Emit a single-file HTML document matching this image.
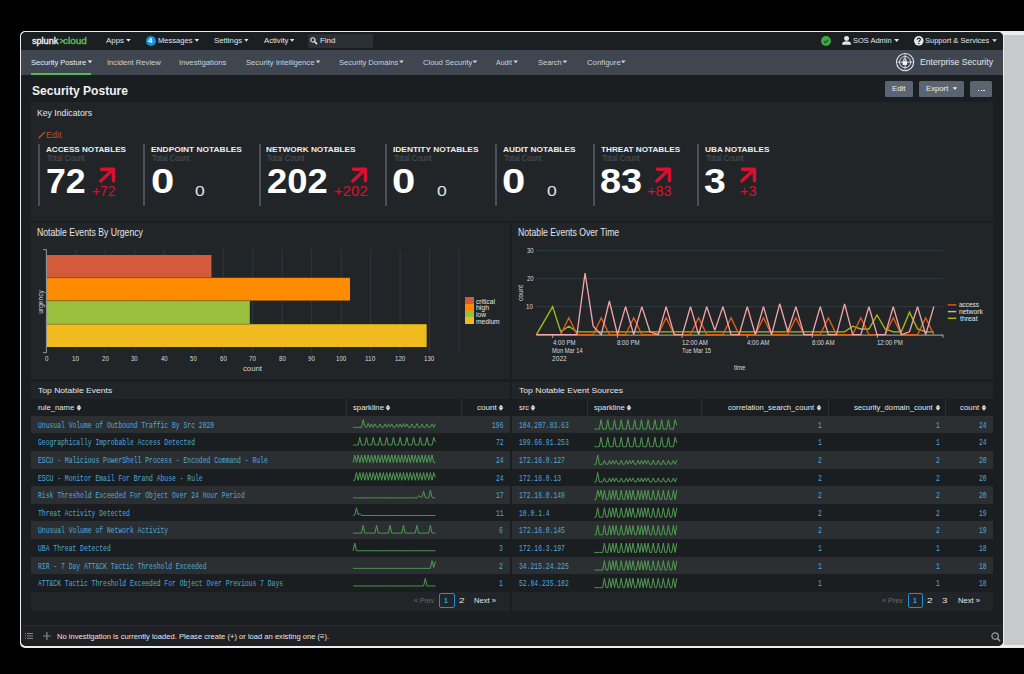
<!DOCTYPE html><html><head><meta charset="utf-8"><style>
html,body{margin:0;padding:0;width:1024px;height:674px;overflow:hidden;background:#000;}
.t{position:absolute;white-space:pre;transform-origin:0 0;}
.r{position:absolute;}
svg{position:absolute;overflow:visible;}
#frame{position:absolute;left:20px;top:31px;width:1004px;height:617px;background:#eceded;border-radius:5px 0 0 5px;}
#gray{position:absolute;left:1004px;top:35px;width:20px;height:610px;background:#c8c9cb;}
#win{position:absolute;left:21px;top:32px;width:982px;height:614px;overflow:hidden;border-radius:5px;background:#1b1e21;}
#in{position:absolute;left:-21px;top:-32px;width:1024px;height:674px;}
</style></head><body>
<div id="frame"></div><div id="gray"></div>
<div id="win"><div id="in">
<div class="r" style="left:0px;top:32px;width:1024px;height:18px;background:#1b1f22;"></div>
<div class="r" style="left:0px;top:50px;width:1024px;height:24.6px;background:#3f4650;"></div>
<div class="r" style="left:30.9px;top:72.8px;width:60px;height:1.8px;background:#53b957;"></div>
<div class="t" style="left:31.67px;top:37.00px;font:400 9.103px/9.103px 'Liberation Sans', sans-serif;color:#f2f2f2;transform:scale(0.9988,1.0000);-webkit-text-stroke:0.35px #f2f2f2;">splunk</div>
<svg style="left:58.5px;top:38px" width="6" height="6" viewBox="0 0 6 6"><path d="M0.9 0.9L4.6 3L0.9 5.1" stroke="#5cbf5a" stroke-width="1.2" fill="none"/></svg>
<div class="t" style="left:63.40px;top:37.00px;font:400 9.103px/9.103px 'Liberation Sans', sans-serif;color:#5cbf5a;transform:scale(1.1011,1.0000);-webkit-text-stroke:0.35px #5cbf5a;">cloud</div>
<div class="t" style="left:106.20px;top:37.00px;font:400 7.464px/7.464px 'Liberation Sans', sans-serif;color:#e3e6e9;transform:scale(1.0626,1.0000);">Apps</div>
<svg style="left:0;top:0" width="1024" height="674"><path d="M126.10 38.90H130.80L128.45 41.80Z" fill="#e1e4e7"/></svg>
<svg style="left:145.7px;top:35.6px" width="10" height="10" viewBox="0 0 10 10"><circle cx="5" cy="5" r="5" fill="#1b8fd8"/></svg>
<div class="t" style="left:148.48px;top:37.00px;font:700 8.116px/8.116px 'Liberation Sans', sans-serif;color:#ffffff;transform:scale(0.9583,1.0000);">4</div>
<div class="t" style="left:157.89px;top:37.00px;font:400 7.464px/7.464px 'Liberation Sans', sans-serif;color:#e3e6e9;transform:scale(1.0163,1.0000);">Messages</div>
<svg style="left:0;top:0" width="1024" height="674"><path d="M194.50 38.90H199.20L196.85 41.80Z" fill="#e1e4e7"/></svg>
<div class="t" style="left:213.75px;top:37.00px;font:400 7.305px/7.305px 'Liberation Sans', sans-serif;color:#e3e6e9;transform:scale(1.0655,1.0000);">Settings</div>
<svg style="left:0;top:0" width="1024" height="674"><path d="M244.20 38.90H248.50L246.35 41.80Z" fill="#e1e4e7"/></svg>
<div class="t" style="left:263.50px;top:37.00px;font:400 7.464px/7.464px 'Liberation Sans', sans-serif;color:#e3e6e9;transform:scale(1.0322,1.0000);">Activity</div>
<svg style="left:0;top:0" width="1024" height="674"><path d="M289.90 38.90H294.40L292.15 41.80Z" fill="#e1e4e7"/></svg>
<div class="r" style="left:308px;top:34px;width:65px;height:14px;background:#2b3035;border-radius:1.5px;"></div>
<svg style="left:310.4px;top:37.4px" width="7" height="7" viewBox="0 0 7 7"><circle cx="2.9" cy="2.9" r="2.15" stroke="#e3e6e9" stroke-width="1.2" fill="none"/><path d="M4.5 4.5L6.6 6.6" stroke="#e3e6e9" stroke-width="1.5" stroke-linecap="round"/></svg>
<div class="t" style="left:319.87px;top:37.00px;font:400 7.464px/7.464px 'Liberation Sans', sans-serif;color:#e3e6e9;transform:scale(1.0619,1.0000);">Find</div>
<svg style="left:821px;top:36px" width="10" height="10" viewBox="0 0 10 10"><circle cx="5" cy="5" r="5" fill="#3ea843"/><path d="M2.9 5.1L4.4 6.6L7.1 3.7" stroke="#24432a" stroke-width="1.1" fill="none"/></svg>
<svg style="left:841.8px;top:36.2px" width="9.2" height="8.8" viewBox="0 0 9.2 8.8"><circle cx="4.6" cy="2.6" r="2.5" fill="#e3e6e9"/><path d="M0 8.8C0 6.2 1.6 5.2 4.6 5.2C7.6 5.2 9.2 6.2 9.2 8.8Z" fill="#e3e6e9"/></svg>
<div class="t" style="left:853.36px;top:37.00px;font:400 7.305px/7.305px 'Liberation Sans', sans-serif;color:#e3e6e9;transform:scale(1.0218,1.0000);">SOS Admin</div>
<svg style="left:0;top:0" width="1024" height="674"><path d="M894.20 39.00H899.20L896.70 41.90Z" fill="#e1e4e7"/></svg>
<svg style="left:913.7px;top:36px" width="9.6" height="9.6" viewBox="0 0 9.6 9.6"><circle cx="4.8" cy="4.8" r="4.8" fill="#e3e6e9"/><path d="M3.2 3.7C3.2 2.7 3.9 2.1 4.8 2.1C5.8 2.1 6.4 2.7 6.4 3.5C6.4 4.6 4.9 4.7 4.9 5.9" stroke="#1b1f22" stroke-width="1.1" fill="none"/><circle cx="4.9" cy="7.4" r="0.7" fill="#1b1f22"/></svg>
<div class="t" style="left:925.26px;top:37.00px;font:400 7.305px/7.305px 'Liberation Sans', sans-serif;color:#e3e6e9;transform:scale(1.0284,1.0000);">Support &amp; Services</div>
<svg style="left:0;top:0" width="1024" height="674"><path d="M992.20 39.20H996.90L994.55 42.10Z" fill="#e1e4e7"/></svg>
<div class="t" style="left:31.06px;top:59.00px;font:400 7.943px/7.943px 'Liberation Sans', sans-serif;color:#eceef0;transform:scale(0.9498,1.0000);">Security Posture</div>
<svg style="left:0;top:0" width="1024" height="674"><path d="M87.70 60.50H92.20L89.95 63.20Z" fill="#eceef0"/></svg>
<div class="t" style="left:107.21px;top:59.00px;font:400 8.116px/8.116px 'Liberation Sans', sans-serif;color:#cdd1d6;transform:scale(0.9402,1.0000);">Incident Review</div>
<div class="t" style="left:178.60px;top:59.00px;font:400 8.116px/8.116px 'Liberation Sans', sans-serif;color:#cdd1d6;transform:scale(0.9565,1.0000);">Investigations</div>
<div class="t" style="left:246.36px;top:59.00px;font:400 7.943px/7.943px 'Liberation Sans', sans-serif;color:#cdd1d6;transform:scale(0.9630,1.0000);">Security Intelligence</div>
<svg style="left:0;top:0" width="1024" height="674"><path d="M315.80 60.50H320.40L318.10 63.20Z" fill="#cdd1d6"/></svg>
<div class="t" style="left:339.06px;top:59.00px;font:400 7.943px/7.943px 'Liberation Sans', sans-serif;color:#cdd1d6;transform:scale(0.9512,1.0000);">Security Domains</div>
<svg style="left:0;top:0" width="1024" height="674"><path d="M399.10 60.50H403.90L401.50 63.20Z" fill="#cdd1d6"/></svg>
<div class="t" style="left:422.82px;top:59.00px;font:400 8.000px/8.000px 'Liberation Sans', sans-serif;color:#cdd1d6;transform:scale(0.9472,1.0000);">Cloud Security</div>
<svg style="left:0;top:0" width="1024" height="674"><path d="M472.60 60.50H477.40L475.00 63.20Z" fill="#cdd1d6"/></svg>
<div class="t" style="left:496.40px;top:59.00px;font:400 8.116px/8.116px 'Liberation Sans', sans-serif;color:#cdd1d6;transform:scale(0.8552,1.0000);">Audit</div>
<svg style="left:0;top:0" width="1024" height="674"><path d="M513.30 60.50H518.10L515.70 63.20Z" fill="#cdd1d6"/></svg>
<div class="t" style="left:538.26px;top:59.00px;font:400 7.943px/7.943px 'Liberation Sans', sans-serif;color:#cdd1d6;transform:scale(0.9414,1.0000);">Search</div>
<svg style="left:0;top:0" width="1024" height="674"><path d="M562.60 60.50H567.40L565.00 63.20Z" fill="#cdd1d6"/></svg>
<div class="t" style="left:586.61px;top:59.00px;font:400 8.000px/8.000px 'Liberation Sans', sans-serif;color:#cdd1d6;transform:scale(0.9718,1.0000);">Configure</div>
<svg style="left:0;top:0" width="1024" height="674"><path d="M620.90 60.50H625.70L623.30 63.20Z" fill="#cdd1d6"/></svg>
<svg style="left:895.9px;top:53px" width="18.4" height="18.4" viewBox="0 0 18.4 18.4"><circle cx="9.1" cy="9.1" r="8.6" stroke="#e3e6e9" stroke-width="1.1" fill="none"/><circle cx="9.1" cy="9.1" r="5.6" stroke="#e3e6e9" stroke-width="0.9" fill="none"/><path d="M9.1 1.2V16.6M1.6 9.1H16.6" stroke="#e3e6e9" stroke-width="0.9"/><rect x="6.6" y="8.3" width="4.4" height="3.6" fill="#f4f5f6"/><path d="M7.5 8.4V7.2a1.3 1.3 0 0 1 2.6 0V8.4" stroke="#f4f5f6" stroke-width="0.9" fill="none"/></svg>
<div class="t" style="left:919.91px;top:58.00px;font:400 8.551px/8.551px 'Liberation Sans', sans-serif;color:#e3e6e9;transform:scale(1.0105,1.0000);">Enterprise Security</div>
<div class="t" style="left:31.60px;top:85.00px;font:700 12.571px/12.571px 'Liberation Sans', sans-serif;color:#f0f1f2;transform:scale(0.9617,1.0000);">Security Posture</div>
<div class="r" style="left:885.2px;top:80.6px;width:27.9px;height:16.4px;background:#5b6571;border-radius:1.5px;"></div>
<div class="r" style="left:919px;top:80.6px;width:45.4px;height:16.4px;background:#5b6571;border-radius:1.5px;"></div>
<div class="r" style="left:969.8px;top:80.6px;width:22.4px;height:16.4px;background:#5b6571;border-radius:1.5px;"></div>
<div class="t" style="left:892.38px;top:85.00px;font:400 7.391px/7.391px 'Liberation Sans', sans-serif;color:#eceef0;transform:scale(1.0558,1.0000);">Edit</div>
<div class="t" style="left:926.28px;top:85.00px;font:400 7.391px/7.391px 'Liberation Sans', sans-serif;color:#eceef0;transform:scale(1.0458,1.0000);">Export</div>
<svg style="left:0;top:0" width="1024" height="674"><path d="M952.70 87.30H957.20L954.95 90.10Z" fill="#eceef0"/></svg>
<div class="r" style="left:977.9px;top:89.7px;width:1.6px;height:1.6px;background:#eceef0;"></div>
<div class="r" style="left:980.5px;top:89.7px;width:1.6px;height:1.6px;background:#eceef0;"></div>
<div class="r" style="left:983.1px;top:89.7px;width:1.6px;height:1.6px;background:#eceef0;"></div>
<div class="r" style="left:31px;top:102px;width:962px;height:119px;background:#222528;"></div>
<div class="t" style="left:37.20px;top:109.00px;font:400 9.348px/9.348px 'Liberation Sans', sans-serif;color:#e3e6e9;transform:scale(0.9302,1.0000);">Key Indicators</div>
<svg style="left:38px;top:132px" width="7.2" height="6.6" viewBox="0 0 7.2 6.6"><path d="M1.5 5.2L6.6 0.5" stroke="#bf521f" stroke-width="1.3" stroke-linecap="round"/><path d="M0.3 6.4L0.9 4.6L2.3 5.9Z" fill="#bf521f"/></svg>
<div class="t" style="left:46.08px;top:131.00px;font:400 9.275px/9.275px 'Liberation Sans', sans-serif;color:#bf521f;transform:scale(0.9662,1.0000);">Edit</div>
<div class="r" style="left:38.25px;top:144px;width:1.5px;height:61.5px;background:#4a5159;"></div>
<div class="t" style="left:46.24px;top:146.00px;font:700 7.971px/7.971px 'Liberation Sans', sans-serif;color:#eceef0;transform:scale(1.0163,1.0000);">ACCESS NOTABLES</div>
<div class="t" style="left:46.95px;top:155.00px;font:400 8.201px/8.201px 'Liberation Sans', sans-serif;color:#4f545a;transform:scale(0.9080,1.0000);">Total Count</div>
<div class="r" style="left:143.25px;top:144px;width:1.5px;height:61.5px;background:#4a5159;"></div>
<div class="t" style="left:150.86px;top:146.00px;font:700 7.971px/7.971px 'Liberation Sans', sans-serif;color:#eceef0;transform:scale(1.0497,1.0000);">ENDPOINT NOTABLES</div>
<div class="t" style="left:151.95px;top:155.00px;font:400 8.201px/8.201px 'Liberation Sans', sans-serif;color:#4f545a;transform:scale(0.9080,1.0000);">Total Count</div>
<div class="r" style="left:259.25px;top:144px;width:1.5px;height:61.5px;background:#4a5159;"></div>
<div class="t" style="left:266.36px;top:146.00px;font:700 7.971px/7.971px 'Liberation Sans', sans-serif;color:#eceef0;transform:scale(1.0346,1.0000);">NETWORK NOTABLES</div>
<div class="t" style="left:267.45px;top:155.00px;font:400 8.201px/8.201px 'Liberation Sans', sans-serif;color:#4f545a;transform:scale(0.9080,1.0000);">Total Count</div>
<div class="r" style="left:385.25px;top:144px;width:1.5px;height:61.5px;background:#4a5159;"></div>
<div class="t" style="left:392.66px;top:146.00px;font:700 7.971px/7.971px 'Liberation Sans', sans-serif;color:#eceef0;transform:scale(1.0474,1.0000);">IDENTITY NOTABLES</div>
<div class="t" style="left:393.75px;top:155.00px;font:400 8.201px/8.201px 'Liberation Sans', sans-serif;color:#4f545a;transform:scale(0.9080,1.0000);">Total Count</div>
<div class="r" style="left:495.25px;top:144px;width:1.5px;height:61.5px;background:#4a5159;"></div>
<div class="t" style="left:503.03px;top:146.00px;font:700 7.971px/7.971px 'Liberation Sans', sans-serif;color:#eceef0;transform:scale(1.0380,1.0000);">AUDIT NOTABLES</div>
<div class="t" style="left:503.75px;top:155.00px;font:400 8.201px/8.201px 'Liberation Sans', sans-serif;color:#4f545a;transform:scale(0.9080,1.0000);">Total Count</div>
<div class="r" style="left:593.25px;top:144px;width:1.5px;height:61.5px;background:#4a5159;"></div>
<div class="t" style="left:601.12px;top:146.00px;font:700 7.971px/7.971px 'Liberation Sans', sans-serif;color:#eceef0;transform:scale(1.0258,1.0000);">THREAT NOTABLES</div>
<div class="t" style="left:601.75px;top:155.00px;font:400 8.201px/8.201px 'Liberation Sans', sans-serif;color:#4f545a;transform:scale(0.9080,1.0000);">Total Count</div>
<div class="r" style="left:697.25px;top:144px;width:1.5px;height:61.5px;background:#4a5159;"></div>
<div class="t" style="left:704.71px;top:146.00px;font:700 7.971px/7.971px 'Liberation Sans', sans-serif;color:#eceef0;transform:scale(1.0329,1.0000);">UBA NOTABLES</div>
<div class="t" style="left:705.75px;top:155.00px;font:400 8.201px/8.201px 'Liberation Sans', sans-serif;color:#4f545a;transform:scale(0.9080,1.0000);">Total Count</div>
<div class="t" style="left:45.57px;top:164.00px;font:700 35.652px/35.652px 'Liberation Sans', sans-serif;color:#ffffff;transform:scale(1.0016,1.0000);">72</div>
<div class="t" style="left:150.54px;top:164.00px;font:700 35.652px/35.652px 'Liberation Sans', sans-serif;color:#ffffff;transform:scale(1.1740,1.0000);">0</div>
<div class="t" style="left:267.11px;top:164.00px;font:700 35.652px/35.652px 'Liberation Sans', sans-serif;color:#ffffff;transform:scale(1.0206,1.0000);">202</div>
<div class="t" style="left:392.14px;top:164.00px;font:700 35.652px/35.652px 'Liberation Sans', sans-serif;color:#ffffff;transform:scale(1.1740,1.0000);">0</div>
<div class="t" style="left:502.14px;top:164.00px;font:700 35.652px/35.652px 'Liberation Sans', sans-serif;color:#ffffff;transform:scale(1.1740,1.0000);">0</div>
<div class="t" style="left:600.06px;top:164.00px;font:700 35.652px/35.652px 'Liberation Sans', sans-serif;color:#ffffff;transform:scale(1.0617,1.0000);">83</div>
<div class="t" style="left:704.42px;top:164.00px;font:700 35.652px/35.652px 'Liberation Sans', sans-serif;color:#ffffff;transform:scale(1.0995,1.0000);">3</div>
<svg style="left:98.9px;top:167.1px" width="16.3" height="15.7" viewBox="0 0 16.3 15.7"><path d="M1.7 14.1L13.2 3.3" stroke="#dc0f2e" stroke-width="3.3" stroke-linecap="round"/><path d="M2.6 2.2H14.5V13.7" stroke="#dc0f2e" stroke-width="3.4" fill="none" stroke-linecap="round" stroke-linejoin="round"/></svg>
<div class="t" style="left:92.38px;top:184.00px;font:400 14.203px/14.203px 'Liberation Sans', sans-serif;color:#dc0f2e;transform:scale(0.9738,1.0000);">+72</div>
<svg style="left:350.7px;top:167.1px" width="16.3" height="15.7" viewBox="0 0 16.3 15.7"><path d="M1.7 14.1L13.2 3.3" stroke="#dc0f2e" stroke-width="3.3" stroke-linecap="round"/><path d="M2.6 2.2H14.5V13.7" stroke="#dc0f2e" stroke-width="3.4" fill="none" stroke-linecap="round" stroke-linejoin="round"/></svg>
<div class="t" style="left:333.53px;top:184.00px;font:400 14.203px/14.203px 'Liberation Sans', sans-serif;color:#dc0f2e;transform:scale(1.0555,1.0000);">+202</div>
<svg style="left:655.2px;top:167.1px" width="16.3" height="15.7" viewBox="0 0 16.3 15.7"><path d="M1.7 14.1L13.2 3.3" stroke="#dc0f2e" stroke-width="3.3" stroke-linecap="round"/><path d="M2.6 2.2H14.5V13.7" stroke="#dc0f2e" stroke-width="3.4" fill="none" stroke-linecap="round" stroke-linejoin="round"/></svg>
<div class="t" style="left:647.35px;top:184.00px;font:400 14.203px/14.203px 'Liberation Sans', sans-serif;color:#dc0f2e;transform:scale(1.0145,1.0000);">+83</div>
<svg style="left:739.7px;top:167.1px" width="16.3" height="15.7" viewBox="0 0 16.3 15.7"><path d="M1.7 14.1L13.2 3.3" stroke="#dc0f2e" stroke-width="3.3" stroke-linecap="round"/><path d="M2.6 2.2H14.5V13.7" stroke="#dc0f2e" stroke-width="3.4" fill="none" stroke-linecap="round" stroke-linejoin="round"/></svg>
<div class="t" style="left:740.15px;top:184.00px;font:400 14.203px/14.203px 'Liberation Sans', sans-serif;color:#dc0f2e;transform:scale(1.0154,1.0000);">+3</div>
<div class="t" style="left:194.59px;top:183.00px;font:400 15.000px/15.000px 'Liberation Sans', sans-serif;color:#e3e6e9;transform:scale(1.1684,1.0000);">0</div>
<div class="t" style="left:436.59px;top:183.00px;font:400 15.000px/15.000px 'Liberation Sans', sans-serif;color:#e3e6e9;transform:scale(1.1684,1.0000);">0</div>
<div class="t" style="left:546.59px;top:183.00px;font:400 15.000px/15.000px 'Liberation Sans', sans-serif;color:#e3e6e9;transform:scale(1.1684,1.0000);">0</div>
<div class="r" style="left:31px;top:223px;width:478.5px;height:156.2px;background:#222528;"></div>
<div class="r" style="left:512px;top:223px;width:481px;height:156.2px;background:#222528;"></div>
<div class="t" style="left:37.31px;top:228.00px;font:400 10.145px/10.145px 'Liberation Sans', sans-serif;color:#e3e6e9;transform:scale(0.8552,1.0000);">Notable Events By Urgency</div>
<div class="t" style="left:518.20px;top:228.00px;font:400 10.145px/10.145px 'Liberation Sans', sans-serif;color:#e3e6e9;transform:scale(0.8563,1.0000);">Notable Events Over Time</div>
<svg style="left:0;top:0" width="1024" height="674" viewBox="0 0 1024 674"><line x1="75.88" y1="249.5" x2="75.88" y2="352.5" stroke="#2e3a3f" stroke-width="0.9"/><line x1="105.35" y1="249.5" x2="105.35" y2="352.5" stroke="#2e3a3f" stroke-width="0.9"/><line x1="134.83" y1="249.5" x2="134.83" y2="352.5" stroke="#2e3a3f" stroke-width="0.9"/><line x1="164.31" y1="249.5" x2="164.31" y2="352.5" stroke="#2e3a3f" stroke-width="0.9"/><line x1="193.78" y1="249.5" x2="193.78" y2="352.5" stroke="#2e3a3f" stroke-width="0.9"/><line x1="223.26" y1="249.5" x2="223.26" y2="352.5" stroke="#2e3a3f" stroke-width="0.9"/><line x1="252.74" y1="249.5" x2="252.74" y2="352.5" stroke="#2e3a3f" stroke-width="0.9"/><line x1="282.22" y1="249.5" x2="282.22" y2="352.5" stroke="#2e3a3f" stroke-width="0.9"/><line x1="311.69" y1="249.5" x2="311.69" y2="352.5" stroke="#2e3a3f" stroke-width="0.9"/><line x1="341.17" y1="249.5" x2="341.17" y2="352.5" stroke="#2e3a3f" stroke-width="0.9"/><line x1="370.65" y1="249.5" x2="370.65" y2="352.5" stroke="#2e3a3f" stroke-width="0.9"/><line x1="400.12" y1="249.5" x2="400.12" y2="352.5" stroke="#2e3a3f" stroke-width="0.9"/><line x1="429.60" y1="249.5" x2="429.60" y2="352.5" stroke="#2e3a3f" stroke-width="0.9"/><line x1="459.08" y1="249.5" x2="459.08" y2="352.5" stroke="#2e3a3f" stroke-width="0.9"/><rect x="46.70" y="255" width="164.77" height="22.80" fill="#d35a3b"/><rect x="46.70" y="277.8" width="303.31" height="22.90" fill="#fe8b00"/><rect x="46.70" y="300.7" width="203.09" height="23.50" fill="#9abf3c"/><rect x="46.70" y="324.2" width="379.95" height="22.80" fill="#efbb1f"/><line x1="46.40" y1="277.8" x2="211.47" y2="277.8" stroke="#000" stroke-opacity="0.3" stroke-width="0.7"/><line x1="46.40" y1="300.7" x2="350.01" y2="300.7" stroke="#000" stroke-opacity="0.3" stroke-width="0.7"/><line x1="46.40" y1="324.2" x2="249.79" y2="324.2" stroke="#000" stroke-opacity="0.3" stroke-width="0.7"/><path d="M43 249.6H46.4V352.6H43" stroke="#9ea4aa" stroke-width="0.9" fill="none"/></svg>
<div class="t" style="left:44.68px;top:356.00px;font:400 6.714px/6.714px 'Liberation Sans', sans-serif;color:#d6d9dc;transform:scale(0.9213,1.0000);">0</div>
<div class="t" style="left:72.25px;top:356.00px;font:400 6.714px/6.714px 'Liberation Sans', sans-serif;color:#d6d9dc;transform:scale(0.9372,1.0000);">10</div>
<div class="t" style="left:101.90px;top:356.00px;font:400 6.714px/6.714px 'Liberation Sans', sans-serif;color:#d6d9dc;transform:scale(0.9144,1.0000);">20</div>
<div class="t" style="left:131.47px;top:356.00px;font:400 6.714px/6.714px 'Liberation Sans', sans-serif;color:#d6d9dc;transform:scale(0.9012,1.0000);">30</div>
<div class="t" style="left:161.04px;top:356.00px;font:400 6.714px/6.714px 'Liberation Sans', sans-serif;color:#d6d9dc;transform:scale(0.8884,1.0000);">40</div>
<div class="t" style="left:190.39px;top:356.00px;font:400 6.714px/6.714px 'Liberation Sans', sans-serif;color:#d6d9dc;transform:scale(0.9056,1.0000);">50</div>
<div class="t" style="left:219.80px;top:356.00px;font:400 6.714px/6.714px 'Liberation Sans', sans-serif;color:#d6d9dc;transform:scale(0.9144,1.0000);">60</div>
<div class="t" style="left:249.28px;top:356.00px;font:400 6.714px/6.714px 'Liberation Sans', sans-serif;color:#d6d9dc;transform:scale(0.9144,1.0000);">70</div>
<div class="t" style="left:278.82px;top:356.00px;font:400 6.714px/6.714px 'Liberation Sans', sans-serif;color:#d6d9dc;transform:scale(0.9056,1.0000);">80</div>
<div class="t" style="left:308.27px;top:356.00px;font:400 6.714px/6.714px 'Liberation Sans', sans-serif;color:#d6d9dc;transform:scale(0.9100,1.0000);">90</div>
<div class="t" style="left:335.91px;top:356.00px;font:400 6.714px/6.714px 'Liberation Sans', sans-serif;color:#d6d9dc;transform:scale(0.9181,1.0000);">100</div>
<div class="t" style="left:365.36px;top:356.00px;font:400 6.714px/6.714px 'Liberation Sans', sans-serif;color:#d6d9dc;transform:scale(0.9641,1.0000);">110</div>
<div class="t" style="left:394.86px;top:356.00px;font:400 6.714px/6.714px 'Liberation Sans', sans-serif;color:#d6d9dc;transform:scale(0.9181,1.0000);">120</div>
<div class="t" style="left:424.34px;top:356.00px;font:400 6.714px/6.714px 'Liberation Sans', sans-serif;color:#d6d9dc;transform:scale(0.9181,1.0000);">130</div>
<div class="t" style="left:243.29px;top:366.00px;font:400 6.667px/6.667px 'Liberation Sans', sans-serif;color:#d6d9dc;transform:scale(1.1608,1.0000);">count</div>
<div class="t" style="left:38.3px;top:302px;font:400 6.6px/6.6px 'Liberation Sans', sans-serif;color:#d6d9dc;transform:rotate(-90deg) translate(-50%,0);transform-origin:0 0">urgency</div>
<div class="r" style="left:465px;top:297.4px;width:9px;height:6.7px;background:#d35a3b;"></div>
<div class="t" style="left:476.43px;top:299.00px;font:400 6.759px/6.759px 'Liberation Sans', sans-serif;color:#e3e6e9;transform:scale(0.9859,1.0000);">critical</div>
<div class="r" style="left:465px;top:304.05px;width:9px;height:6.7px;background:#fe8b00;"></div>
<div class="t" style="left:476.25px;top:305.00px;font:400 6.759px/6.759px 'Liberation Sans', sans-serif;color:#e3e6e9;transform:scale(1.0230,1.0000);">high</div>
<div class="r" style="left:465px;top:310.7px;width:9px;height:6.7px;background:#9abf3c;"></div>
<div class="t" style="left:476.27px;top:312.00px;font:400 6.759px/6.759px 'Liberation Sans', sans-serif;color:#e3e6e9;transform:scale(0.9875,1.0000);">low</div>
<div class="r" style="left:465px;top:317.35px;width:9px;height:6.7px;background:#efbb1f;"></div>
<div class="t" style="left:476.27px;top:319.00px;font:400 6.759px/6.759px 'Liberation Sans', sans-serif;color:#e3e6e9;transform:scale(0.9839,1.0000);">medium</div>
<svg style="left:0;top:0" width="1024" height="674" viewBox="0 0 1024 674"><line x1="536.4" y1="306.60" x2="942.9" y2="306.60" stroke="#344449" stroke-width="0.8"/><line x1="536.4" y1="278.60" x2="942.9" y2="278.60" stroke="#344449" stroke-width="0.8"/><line x1="536.4" y1="250.60" x2="942.9" y2="250.60" stroke="#344449" stroke-width="0.8"/><line x1="536.4" y1="335.1" x2="942.9" y2="335.1" stroke="#b9bec3" stroke-width="0.9"/><line x1="552.7" y1="334.6" x2="552.7" y2="337.8" stroke="#b9bec3" stroke-width="0.9"/><line x1="617.4" y1="334.6" x2="617.4" y2="337.8" stroke="#b9bec3" stroke-width="0.9"/><line x1="682.1" y1="334.6" x2="682.1" y2="337.8" stroke="#b9bec3" stroke-width="0.9"/><line x1="747.3" y1="334.6" x2="747.3" y2="337.8" stroke="#b9bec3" stroke-width="0.9"/><line x1="812.3" y1="334.6" x2="812.3" y2="337.8" stroke="#b9bec3" stroke-width="0.9"/><line x1="877.4" y1="334.6" x2="877.4" y2="337.8" stroke="#b9bec3" stroke-width="0.9"/><line x1="942.9" y1="334.6" x2="942.9" y2="337.8" stroke="#b9bec3" stroke-width="0.9"/><polyline points="536.40,334.60 544.51,320.60 552.62,306.60 560.73,331.80 568.84,326.20 576.95,331.80 585.06,331.80 593.17,331.80 601.28,331.80 609.39,331.80 617.50,331.80 625.61,331.80 633.72,331.80 641.83,331.80 649.94,331.80 658.05,331.80 666.16,331.80 674.27,331.80 682.38,331.80 690.49,331.80 698.60,331.80 706.71,331.80 714.82,331.80 722.93,331.80 731.04,331.80 739.15,331.80 747.26,331.80 755.37,331.80 763.48,331.80 771.59,331.80 779.70,331.80 787.81,331.80 795.92,331.80 804.03,331.80 812.14,331.80 820.25,331.80 828.36,331.80 836.47,331.80 844.58,331.80 852.69,326.20 860.80,329.00 868.91,329.00 877.02,315.00 885.13,329.00 893.24,331.80 901.35,331.80 909.46,312.20 917.57,329.00 925.68,331.80 933.79,331.80" fill="none" stroke="#a5bd12" stroke-width="1.35" stroke-linejoin="miter" stroke-miterlimit="3"/><polyline points="536.40,334.60 544.51,334.60 552.62,334.60 560.73,334.60 568.84,317.80 576.95,334.60 585.06,334.60 593.17,334.60 601.28,317.80 609.39,334.60 617.50,334.60 625.61,334.60 633.72,317.80 641.83,334.60 649.94,334.60 658.05,334.60 666.16,317.80 674.27,334.60 682.38,334.60 690.49,334.60 698.60,317.80 706.71,334.60 714.82,334.60 722.93,334.60 731.04,317.80 739.15,334.60 747.26,334.60 755.37,334.60 763.48,317.80 771.59,334.60 779.70,334.60 787.81,334.60 795.92,317.80 804.03,334.60 812.14,334.60 820.25,334.60 828.36,317.80 836.47,334.60 844.58,334.60 852.69,334.60 860.80,317.80 868.91,334.60 877.02,334.60 885.13,334.60 893.24,317.80 901.35,334.60 909.46,334.60 917.57,334.60 925.68,317.80 933.79,334.60" fill="none" stroke="#e35d18" stroke-width="1.35" stroke-linejoin="miter" stroke-miterlimit="3"/><polyline points="536.40,334.60 544.51,334.60 552.62,334.60 560.73,334.60 568.84,334.60 576.95,334.60 585.06,273.00 593.17,326.20 601.28,334.60 609.39,301.00 617.50,334.60 625.61,306.60 633.72,334.60 641.83,306.60 649.94,331.80 658.05,334.60 666.16,306.60 674.27,334.60 682.38,334.60 690.49,306.60 698.60,334.60 706.71,306.60 714.82,330.40 722.93,306.60 731.04,334.60 739.15,334.60 747.26,306.60 755.37,334.60 763.48,306.60 771.59,334.60 779.70,303.80 787.81,331.80 795.92,306.60 804.03,334.60 812.14,334.60 820.25,306.60 828.36,334.60 836.47,334.60 844.58,303.80 852.69,334.60 860.80,334.60 868.91,306.60 877.02,334.60 885.13,334.60 893.24,306.60 901.35,334.60 909.46,331.80 917.57,306.60 925.68,334.60 933.79,306.60" fill="none" stroke="#f1a3a8" stroke-width="1.35" stroke-linejoin="miter" stroke-miterlimit="3"/><line x1="947.8" y1="304.90" x2="956.3" y2="304.90" stroke="#e35d18" stroke-width="1.4"/><line x1="947.8" y1="311.60" x2="956.3" y2="311.60" stroke="#f1a3a8" stroke-width="1.4"/><line x1="947.8" y1="318.30" x2="956.3" y2="318.30" stroke="#a5bd12" stroke-width="1.4"/></svg>
<div class="t" style="left:959.34px;top:302.00px;font:400 6.667px/6.667px 'Liberation Sans', sans-serif;color:#e3e6e9;transform:scale(0.9630,1.0000);">access</div>
<div class="t" style="left:959.16px;top:309.00px;font:400 6.759px/6.759px 'Liberation Sans', sans-serif;color:#e3e6e9;transform:scale(1.0103,1.0000);">network</div>
<div class="t" style="left:959.50px;top:316.00px;font:400 6.759px/6.759px 'Liberation Sans', sans-serif;color:#e3e6e9;transform:scale(1.0197,1.0000);">threat</div>
<div class="t" style="left:526.34px;top:304.00px;font:400 6.714px/6.714px 'Liberation Sans', sans-serif;color:#d6d9dc;transform:scale(0.9223,1.0000);">10</div>
<div class="t" style="left:526.50px;top:276.00px;font:400 6.714px/6.714px 'Liberation Sans', sans-serif;color:#d6d9dc;transform:scale(0.8999,1.0000);">20</div>
<div class="t" style="left:526.59px;top:248.00px;font:400 6.714px/6.714px 'Liberation Sans', sans-serif;color:#d6d9dc;transform:scale(0.8869,1.0000);">30</div>
<div class="t" style="left:552.58px;top:340.00px;font:400 6.812px/6.812px 'Liberation Sans', sans-serif;color:#d6d9dc;transform:scale(0.8907,1.0000);">4:00 PM</div>
<div class="t" style="left:552.24px;top:348.00px;font:400 6.812px/6.812px 'Liberation Sans', sans-serif;color:#d6d9dc;transform:scale(0.8478,1.0000);">Mon Mar 14</div>
<div class="t" style="left:552.37px;top:356.00px;font:400 6.714px/6.714px 'Liberation Sans', sans-serif;color:#d6d9dc;transform:scale(0.9936,1.0000);">2022</div>
<div class="t" style="left:617.16px;top:340.00px;font:400 6.667px/6.667px 'Liberation Sans', sans-serif;color:#d6d9dc;transform:scale(0.9151,1.0000);">8:00 PM</div>
<div class="t" style="left:681.64px;top:340.00px;font:400 6.812px/6.812px 'Liberation Sans', sans-serif;color:#d6d9dc;transform:scale(0.8999,1.0000);">12:00 AM</div>
<div class="t" style="left:681.99px;top:348.00px;font:400 6.763px/6.763px 'Liberation Sans', sans-serif;color:#d6d9dc;transform:scale(0.8462,1.0000);">Tue Mar 15</div>
<div class="t" style="left:747.18px;top:340.00px;font:400 6.812px/6.812px 'Liberation Sans', sans-serif;color:#d6d9dc;transform:scale(0.8988,1.0000);">4:00 AM</div>
<div class="t" style="left:812.05px;top:340.00px;font:400 6.667px/6.667px 'Liberation Sans', sans-serif;color:#d6d9dc;transform:scale(0.9234,1.0000);">8:00 AM</div>
<div class="t" style="left:876.95px;top:340.00px;font:400 6.812px/6.812px 'Liberation Sans', sans-serif;color:#d6d9dc;transform:scale(0.8893,1.0000);">12:00 PM</div>
<div class="t" style="left:734.11px;top:364.00px;font:400 7.077px/7.077px 'Liberation Sans', sans-serif;color:#d6d9dc;transform:scale(0.8557,1.0000);">time</div>
<div class="t" style="left:518.4px;top:292.5px;font:400 6.6px/6.6px 'Liberation Sans', sans-serif;color:#d6d9dc;transform:rotate(-90deg) translate(-50%,0);transform-origin:0 0">count</div>
<div class="r" style="left:31px;top:382px;width:478.5px;height:228.7px;background:#222528;"></div>
<div class="r" style="left:512px;top:382px;width:481px;height:228.7px;background:#222528;"></div>
<div class="t" style="left:38.23px;top:387.00px;font:400 7.914px/7.914px 'Liberation Sans', sans-serif;color:#e3e6e9;transform:scale(1.0823,1.0000);">Top Notable Events</div>
<div class="t" style="left:518.83px;top:387.00px;font:400 7.914px/7.914px 'Liberation Sans', sans-serif;color:#e3e6e9;transform:scale(1.0863,1.0000);">Top Notable Event Sources</div>
<div class="r" style="left:31px;top:398.5px;width:478.5px;height:17.19999999999999px;background:#1a1e21;"></div>
<div class="r" style="left:512px;top:398.5px;width:481px;height:17.19999999999999px;background:#1a1e21;"></div>
<div class="r" style="left:31px;top:415.7px;width:478.5px;height:17.62px;background:#2b2f32;"></div>
<div class="r" style="left:512px;top:415.7px;width:481px;height:17.62px;background:#2b2f32;"></div>
<div class="r" style="left:31px;top:433.32px;width:478.5px;height:17.62px;background:#1a1e21;"></div>
<div class="r" style="left:512px;top:433.32px;width:481px;height:17.62px;background:#1a1e21;"></div>
<div class="r" style="left:31px;top:450.94px;width:478.5px;height:17.62px;background:#2b2f32;"></div>
<div class="r" style="left:512px;top:450.94px;width:481px;height:17.62px;background:#2b2f32;"></div>
<div class="r" style="left:31px;top:468.56px;width:478.5px;height:17.62px;background:#1a1e21;"></div>
<div class="r" style="left:512px;top:468.56px;width:481px;height:17.62px;background:#1a1e21;"></div>
<div class="r" style="left:31px;top:486.18px;width:478.5px;height:17.62px;background:#2b2f32;"></div>
<div class="r" style="left:512px;top:486.18px;width:481px;height:17.62px;background:#2b2f32;"></div>
<div class="r" style="left:31px;top:503.8px;width:478.5px;height:17.62px;background:#1a1e21;"></div>
<div class="r" style="left:512px;top:503.8px;width:481px;height:17.62px;background:#1a1e21;"></div>
<div class="r" style="left:31px;top:521.42px;width:478.5px;height:17.62px;background:#2b2f32;"></div>
<div class="r" style="left:512px;top:521.42px;width:481px;height:17.62px;background:#2b2f32;"></div>
<div class="r" style="left:31px;top:539.04px;width:478.5px;height:17.62px;background:#1a1e21;"></div>
<div class="r" style="left:512px;top:539.04px;width:481px;height:17.62px;background:#1a1e21;"></div>
<div class="r" style="left:31px;top:556.66px;width:478.5px;height:17.62px;background:#2b2f32;"></div>
<div class="r" style="left:512px;top:556.66px;width:481px;height:17.62px;background:#2b2f32;"></div>
<div class="r" style="left:31px;top:574.28px;width:478.5px;height:17.62px;background:#1a1e21;"></div>
<div class="r" style="left:512px;top:574.28px;width:481px;height:17.62px;background:#1a1e21;"></div>
<div class="r" style="left:346.2px;top:398.5px;width:1px;height:17.19999999999999px;background:#2b3034;"></div>
<div class="r" style="left:461.0px;top:398.5px;width:1px;height:17.19999999999999px;background:#2b3034;"></div>
<div class="r" style="left:586.7px;top:398.5px;width:1px;height:17.19999999999999px;background:#2b3034;"></div>
<div class="r" style="left:700.9px;top:398.5px;width:1px;height:17.19999999999999px;background:#2b3034;"></div>
<div class="r" style="left:827.8px;top:398.5px;width:1px;height:17.19999999999999px;background:#2b3034;"></div>
<div class="r" style="left:945.4px;top:398.5px;width:1px;height:17.19999999999999px;background:#2b3034;"></div>
<div class="t" style="left:37.50px;top:405.00px;font:400 6.621px/6.621px 'Liberation Sans', sans-serif;color:#e3e6e9;transform:scale(1.1576,1.0000);">rule_name</div>
<svg style="left:76.9px;top:404.9px" width="3.9" height="5.4" viewBox="0 0 3.9 5.4"><path d="M1.95 0L3.9 2.4H0Z M1.95 5.4L3.9 3.0H0Z" fill="#d9dcdf" stroke="#d9dcdf" stroke-width="0.5" stroke-linejoin="round"/></svg>
<div class="t" style="left:352.81px;top:405.00px;font:400 6.621px/6.621px 'Liberation Sans', sans-serif;color:#e3e6e9;transform:scale(1.1705,1.0000);">sparkline</div>
<svg style="left:386.2px;top:404.9px" width="3.9" height="5.4" viewBox="0 0 3.9 5.4"><path d="M1.95 0L3.9 2.4H0Z M1.95 5.4L3.9 3.0H0Z" fill="#d9dcdf" stroke="#d9dcdf" stroke-width="0.5" stroke-linejoin="round"/></svg>
<div class="t" style="left:477.18px;top:405.00px;font:400 6.621px/6.621px 'Liberation Sans', sans-serif;color:#e3e6e9;transform:scale(1.2254,1.0000);">count</div>
<svg style="left:499.1px;top:404.9px" width="3.9" height="5.4" viewBox="0 0 3.9 5.4"><path d="M1.95 0L3.9 2.4H0Z M1.95 5.4L3.9 3.0H0Z" fill="#d9dcdf" stroke="#d9dcdf" stroke-width="0.5" stroke-linejoin="round"/></svg>
<div class="t" style="left:518.71px;top:405.00px;font:400 6.621px/6.621px 'Liberation Sans', sans-serif;color:#e3e6e9;transform:scale(1.1302,1.0000);">src</div>
<svg style="left:531.4px;top:404.9px" width="3.9" height="5.4" viewBox="0 0 3.9 5.4"><path d="M1.95 0L3.9 2.4H0Z M1.95 5.4L3.9 3.0H0Z" fill="#d9dcdf" stroke="#d9dcdf" stroke-width="0.5" stroke-linejoin="round"/></svg>
<div class="t" style="left:594.01px;top:405.00px;font:400 6.621px/6.621px 'Liberation Sans', sans-serif;color:#e3e6e9;transform:scale(1.1628,1.0000);">sparkline</div>
<svg style="left:627px;top:404.9px" width="3.9" height="5.4" viewBox="0 0 3.9 5.4"><path d="M1.95 0L3.9 2.4H0Z M1.95 5.4L3.9 3.0H0Z" fill="#d9dcdf" stroke="#d9dcdf" stroke-width="0.5" stroke-linejoin="round"/></svg>
<div class="t" style="left:728.49px;top:405.00px;font:400 6.621px/6.621px 'Liberation Sans', sans-serif;color:#e3e6e9;transform:scale(1.1599,1.0000);">correlation_search_count</div>
<svg style="left:817.2px;top:404.9px" width="3.9" height="5.4" viewBox="0 0 3.9 5.4"><path d="M1.95 0L3.9 2.4H0Z M1.95 5.4L3.9 3.0H0Z" fill="#d9dcdf" stroke="#d9dcdf" stroke-width="0.5" stroke-linejoin="round"/></svg>
<div class="t" style="left:853.91px;top:405.00px;font:400 6.621px/6.621px 'Liberation Sans', sans-serif;color:#e3e6e9;transform:scale(1.1576,1.0000);">security_domain_count</div>
<svg style="left:935.9px;top:404.9px" width="3.9" height="5.4" viewBox="0 0 3.9 5.4"><path d="M1.95 0L3.9 2.4H0Z M1.95 5.4L3.9 3.0H0Z" fill="#d9dcdf" stroke="#d9dcdf" stroke-width="0.5" stroke-linejoin="round"/></svg>
<div class="t" style="left:960.39px;top:405.00px;font:400 6.621px/6.621px 'Liberation Sans', sans-serif;color:#e3e6e9;transform:scale(1.1877,1.0000);">count</div>
<svg style="left:982.3px;top:404.9px" width="3.9" height="5.4" viewBox="0 0 3.9 5.4"><path d="M1.95 0L3.9 2.4H0Z M1.95 5.4L3.9 3.0H0Z" fill="#d9dcdf" stroke="#d9dcdf" stroke-width="0.5" stroke-linejoin="round"/></svg>
<div class="t" style="left:37.60px;top:422px;font:400 8.4px/8.4px 'Liberation Mono', monospace;color:#4fa9dd;transform:scaleX(0.7619)">Unusual Volume of Outbound Traffic By Src 2020</div>
<div class="t" style="left:491.68px;top:422px;font:400 8.4px/8.4px 'Liberation Mono', monospace;color:#4fa9dd;transform:scaleX(0.7619)">196</div>
<div class="t" style="left:37.60px;top:439px;font:400 8.4px/8.4px 'Liberation Mono', monospace;color:#4fa9dd;transform:scaleX(0.7619)">Geographically Improbable Access Detected</div>
<div class="t" style="left:495.52px;top:439px;font:400 8.4px/8.4px 'Liberation Mono', monospace;color:#4fa9dd;transform:scaleX(0.7619)">72</div>
<div class="t" style="left:37.60px;top:457px;font:400 8.4px/8.4px 'Liberation Mono', monospace;color:#4fa9dd;transform:scaleX(0.7619)">ESCU - Malicious PowerShell Process - Encoded Command - Rule</div>
<div class="t" style="left:495.52px;top:457px;font:400 8.4px/8.4px 'Liberation Mono', monospace;color:#4fa9dd;transform:scaleX(0.7619)">24</div>
<div class="t" style="left:37.60px;top:475px;font:400 8.4px/8.4px 'Liberation Mono', monospace;color:#4fa9dd;transform:scaleX(0.7619)">ESCU - Monitor Email For Brand Abuse - Rule</div>
<div class="t" style="left:495.52px;top:475px;font:400 8.4px/8.4px 'Liberation Mono', monospace;color:#4fa9dd;transform:scaleX(0.7619)">24</div>
<div class="t" style="left:37.60px;top:492px;font:400 8.4px/8.4px 'Liberation Mono', monospace;color:#4fa9dd;transform:scaleX(0.7619)">Risk Threshold Exceeded For Object Over 24 Hour Period</div>
<div class="t" style="left:495.52px;top:492px;font:400 8.4px/8.4px 'Liberation Mono', monospace;color:#4fa9dd;transform:scaleX(0.7619)">17</div>
<div class="t" style="left:37.60px;top:510px;font:400 8.4px/8.4px 'Liberation Mono', monospace;color:#4fa9dd;transform:scaleX(0.7619)">Threat Activity Detected</div>
<div class="t" style="left:495.52px;top:510px;font:400 8.4px/8.4px 'Liberation Mono', monospace;color:#4fa9dd;transform:scaleX(0.7619)">11</div>
<div class="t" style="left:37.60px;top:527px;font:400 8.4px/8.4px 'Liberation Mono', monospace;color:#4fa9dd;transform:scaleX(0.7619)">Unusual Volume of Network Activity</div>
<div class="t" style="left:499.36px;top:527px;font:400 8.4px/8.4px 'Liberation Mono', monospace;color:#4fa9dd;transform:scaleX(0.7619)">6</div>
<div class="t" style="left:37.60px;top:545px;font:400 8.4px/8.4px 'Liberation Mono', monospace;color:#4fa9dd;transform:scaleX(0.7619)">UBA Threat Detected</div>
<div class="t" style="left:499.36px;top:545px;font:400 8.4px/8.4px 'Liberation Mono', monospace;color:#4fa9dd;transform:scaleX(0.7619)">3</div>
<div class="t" style="left:37.60px;top:563px;font:400 8.4px/8.4px 'Liberation Mono', monospace;color:#4fa9dd;transform:scaleX(0.7619)">RIR - 7 Day ATT&amp;CK Tactic Threshold Exceeded</div>
<div class="t" style="left:499.36px;top:563px;font:400 8.4px/8.4px 'Liberation Mono', monospace;color:#4fa9dd;transform:scaleX(0.7619)">2</div>
<div class="t" style="left:37.60px;top:580px;font:400 8.4px/8.4px 'Liberation Mono', monospace;color:#4fa9dd;transform:scaleX(0.7619)">ATT&amp;CK Tactic Threshold Exceeded For Object Over Previous 7 Days</div>
<div class="t" style="left:499.36px;top:580px;font:400 8.4px/8.4px 'Liberation Mono', monospace;color:#4fa9dd;transform:scaleX(0.7619)">1</div>
<div class="t" style="left:518.80px;top:422px;font:400 8.4px/8.4px 'Liberation Mono', monospace;color:#4fa9dd;transform:scaleX(0.7619)">104.207.83.63</div>
<div class="t" style="left:817.96px;top:422px;font:400 8.4px/8.4px 'Liberation Mono', monospace;color:#4fa9dd;transform:scaleX(0.7619)">1</div>
<div class="t" style="left:936.36px;top:422px;font:400 8.4px/8.4px 'Liberation Mono', monospace;color:#4fa9dd;transform:scaleX(0.7619)">1</div>
<div class="t" style="left:979.32px;top:422px;font:400 8.4px/8.4px 'Liberation Mono', monospace;color:#4fa9dd;transform:scaleX(0.7619)">24</div>
<div class="t" style="left:518.80px;top:439px;font:400 8.4px/8.4px 'Liberation Mono', monospace;color:#4fa9dd;transform:scaleX(0.7619)">199.66.91.253</div>
<div class="t" style="left:817.96px;top:439px;font:400 8.4px/8.4px 'Liberation Mono', monospace;color:#4fa9dd;transform:scaleX(0.7619)">1</div>
<div class="t" style="left:936.36px;top:439px;font:400 8.4px/8.4px 'Liberation Mono', monospace;color:#4fa9dd;transform:scaleX(0.7619)">1</div>
<div class="t" style="left:979.32px;top:439px;font:400 8.4px/8.4px 'Liberation Mono', monospace;color:#4fa9dd;transform:scaleX(0.7619)">24</div>
<div class="t" style="left:518.80px;top:457px;font:400 8.4px/8.4px 'Liberation Mono', monospace;color:#4fa9dd;transform:scaleX(0.7619)">172.16.0.127</div>
<div class="t" style="left:817.96px;top:457px;font:400 8.4px/8.4px 'Liberation Mono', monospace;color:#4fa9dd;transform:scaleX(0.7619)">2</div>
<div class="t" style="left:936.36px;top:457px;font:400 8.4px/8.4px 'Liberation Mono', monospace;color:#4fa9dd;transform:scaleX(0.7619)">2</div>
<div class="t" style="left:979.32px;top:457px;font:400 8.4px/8.4px 'Liberation Mono', monospace;color:#4fa9dd;transform:scaleX(0.7619)">20</div>
<div class="t" style="left:518.80px;top:475px;font:400 8.4px/8.4px 'Liberation Mono', monospace;color:#4fa9dd;transform:scaleX(0.7619)">172.16.0.13</div>
<div class="t" style="left:817.96px;top:475px;font:400 8.4px/8.4px 'Liberation Mono', monospace;color:#4fa9dd;transform:scaleX(0.7619)">2</div>
<div class="t" style="left:936.36px;top:475px;font:400 8.4px/8.4px 'Liberation Mono', monospace;color:#4fa9dd;transform:scaleX(0.7619)">2</div>
<div class="t" style="left:979.32px;top:475px;font:400 8.4px/8.4px 'Liberation Mono', monospace;color:#4fa9dd;transform:scaleX(0.7619)">20</div>
<div class="t" style="left:518.80px;top:492px;font:400 8.4px/8.4px 'Liberation Mono', monospace;color:#4fa9dd;transform:scaleX(0.7619)">172.16.0.149</div>
<div class="t" style="left:817.96px;top:492px;font:400 8.4px/8.4px 'Liberation Mono', monospace;color:#4fa9dd;transform:scaleX(0.7619)">2</div>
<div class="t" style="left:936.36px;top:492px;font:400 8.4px/8.4px 'Liberation Mono', monospace;color:#4fa9dd;transform:scaleX(0.7619)">2</div>
<div class="t" style="left:979.32px;top:492px;font:400 8.4px/8.4px 'Liberation Mono', monospace;color:#4fa9dd;transform:scaleX(0.7619)">20</div>
<div class="t" style="left:518.80px;top:510px;font:400 8.4px/8.4px 'Liberation Mono', monospace;color:#4fa9dd;transform:scaleX(0.7619)">10.0.1.4</div>
<div class="t" style="left:817.96px;top:510px;font:400 8.4px/8.4px 'Liberation Mono', monospace;color:#4fa9dd;transform:scaleX(0.7619)">2</div>
<div class="t" style="left:936.36px;top:510px;font:400 8.4px/8.4px 'Liberation Mono', monospace;color:#4fa9dd;transform:scaleX(0.7619)">2</div>
<div class="t" style="left:979.32px;top:510px;font:400 8.4px/8.4px 'Liberation Mono', monospace;color:#4fa9dd;transform:scaleX(0.7619)">19</div>
<div class="t" style="left:518.80px;top:527px;font:400 8.4px/8.4px 'Liberation Mono', monospace;color:#4fa9dd;transform:scaleX(0.7619)">172.16.0.145</div>
<div class="t" style="left:817.96px;top:527px;font:400 8.4px/8.4px 'Liberation Mono', monospace;color:#4fa9dd;transform:scaleX(0.7619)">2</div>
<div class="t" style="left:936.36px;top:527px;font:400 8.4px/8.4px 'Liberation Mono', monospace;color:#4fa9dd;transform:scaleX(0.7619)">2</div>
<div class="t" style="left:979.32px;top:527px;font:400 8.4px/8.4px 'Liberation Mono', monospace;color:#4fa9dd;transform:scaleX(0.7619)">19</div>
<div class="t" style="left:518.80px;top:545px;font:400 8.4px/8.4px 'Liberation Mono', monospace;color:#4fa9dd;transform:scaleX(0.7619)">172.16.3.197</div>
<div class="t" style="left:817.96px;top:545px;font:400 8.4px/8.4px 'Liberation Mono', monospace;color:#4fa9dd;transform:scaleX(0.7619)">1</div>
<div class="t" style="left:936.36px;top:545px;font:400 8.4px/8.4px 'Liberation Mono', monospace;color:#4fa9dd;transform:scaleX(0.7619)">1</div>
<div class="t" style="left:979.32px;top:545px;font:400 8.4px/8.4px 'Liberation Mono', monospace;color:#4fa9dd;transform:scaleX(0.7619)">18</div>
<div class="t" style="left:518.80px;top:563px;font:400 8.4px/8.4px 'Liberation Mono', monospace;color:#4fa9dd;transform:scaleX(0.7619)">34.215.24.225</div>
<div class="t" style="left:817.96px;top:563px;font:400 8.4px/8.4px 'Liberation Mono', monospace;color:#4fa9dd;transform:scaleX(0.7619)">1</div>
<div class="t" style="left:936.36px;top:563px;font:400 8.4px/8.4px 'Liberation Mono', monospace;color:#4fa9dd;transform:scaleX(0.7619)">1</div>
<div class="t" style="left:979.32px;top:563px;font:400 8.4px/8.4px 'Liberation Mono', monospace;color:#4fa9dd;transform:scaleX(0.7619)">18</div>
<div class="t" style="left:518.80px;top:580px;font:400 8.4px/8.4px 'Liberation Mono', monospace;color:#4fa9dd;transform:scaleX(0.7619)">52.84.235.102</div>
<div class="t" style="left:817.96px;top:580px;font:400 8.4px/8.4px 'Liberation Mono', monospace;color:#4fa9dd;transform:scaleX(0.7619)">1</div>
<div class="t" style="left:936.36px;top:580px;font:400 8.4px/8.4px 'Liberation Mono', monospace;color:#4fa9dd;transform:scaleX(0.7619)">1</div>
<div class="t" style="left:979.32px;top:580px;font:400 8.4px/8.4px 'Liberation Mono', monospace;color:#4fa9dd;transform:scaleX(0.7619)">18</div>
<svg style="left:0;top:0" width="1024" height="674" viewBox="0 0 1024 674"><polyline points="353.10,427.40 354.78,427.40 356.46,427.40 358.14,427.40 359.82,427.40 361.50,427.40 363.18,419.70 364.86,426.35 366.54,427.40 368.22,423.20 369.90,427.40 371.58,423.90 373.26,427.40 374.93,423.90 376.61,427.05 378.29,427.40 379.97,423.90 381.65,427.40 383.33,427.40 385.01,423.90 386.69,427.40 388.37,423.90 390.05,426.88 391.73,423.90 393.41,427.40 395.09,427.40 396.77,423.90 398.45,427.40 400.13,423.90 401.81,427.40 403.49,423.55 405.17,427.05 406.85,423.90 408.53,427.40 410.21,427.40 411.89,423.90 413.57,427.40 415.24,427.40 416.92,423.55 418.60,427.40 420.28,427.40 421.96,423.90 423.64,427.40 425.32,427.40 427.00,423.90 428.68,427.40 430.36,427.05 432.04,423.90 433.72,427.40 435.40,423.90" fill="none" stroke="#4f9b50" stroke-width="1" stroke-linejoin="round"/><polyline points="353.10,445.02 354.78,445.02 356.46,445.02 358.14,445.02 359.82,437.32 361.50,445.02 363.18,445.02 364.86,445.02 366.54,437.32 368.22,445.02 369.90,445.02 371.58,445.02 373.26,437.32 374.93,445.02 376.61,445.02 378.29,445.02 379.97,437.32 381.65,445.02 383.33,445.02 385.01,445.02 386.69,437.32 388.37,445.02 390.05,445.02 391.73,445.02 393.41,437.32 395.09,445.02 396.77,445.02 398.45,445.02 400.13,437.32 401.81,445.02 403.49,445.02 405.17,445.02 406.85,437.32 408.53,445.02 410.21,445.02 411.89,445.02 413.57,437.32 415.24,445.02 416.92,445.02 418.60,445.02 420.28,437.32 421.96,445.02 423.64,445.02 425.32,445.02 427.00,437.32 428.68,445.02 430.36,445.02 432.04,445.02 433.72,437.32 435.40,441.94" fill="none" stroke="#4f9b50" stroke-width="1" stroke-linejoin="round"/><polyline points="353.10,462.64 354.78,454.94 356.46,462.64 358.14,454.94 359.82,462.64 361.50,454.94 363.18,462.64 364.86,454.94 366.54,462.64 368.22,454.94 369.90,462.64 371.58,454.94 373.26,462.64 374.93,454.94 376.61,462.64 378.29,454.94 379.97,462.64 381.65,454.94 383.33,462.64 385.01,454.94 386.69,462.64 388.37,454.94 390.05,462.64 391.73,454.94 393.41,462.64 395.09,454.94 396.77,462.64 398.45,454.94 400.13,462.64 401.81,454.94 403.49,462.64 405.17,454.94 406.85,462.64 408.53,454.94 410.21,462.64 411.89,454.94 413.57,462.64 415.24,454.94 416.92,462.64 418.60,454.94 420.28,462.64 421.96,454.94 423.64,462.64 425.32,454.94 427.00,462.64 428.68,454.94 430.36,462.64 432.04,454.94 433.72,462.64 435.40,462.64" fill="none" stroke="#4f9b50" stroke-width="1" stroke-linejoin="round"/><polyline points="353.10,480.26 354.78,480.26 356.46,472.56 358.14,480.26 359.82,472.56 361.50,480.26 363.18,472.56 364.86,480.26 366.54,472.56 368.22,480.26 369.90,472.56 371.58,480.26 373.26,472.56 374.93,480.26 376.61,472.56 378.29,480.26 379.97,472.56 381.65,480.26 383.33,472.56 385.01,480.26 386.69,472.56 388.37,480.26 390.05,472.56 391.73,480.26 393.41,472.56 395.09,480.26 396.77,472.56 398.45,480.26 400.13,472.56 401.81,480.26 403.49,472.56 405.17,480.26 406.85,472.56 408.53,480.26 410.21,472.56 411.89,480.26 413.57,472.56 415.24,480.26 416.92,472.56 418.60,480.26 420.28,472.56 421.96,480.26 423.64,472.56 425.32,480.26 427.00,472.56 428.68,480.26 430.36,472.56 432.04,480.26 433.72,472.56 435.40,477.56" fill="none" stroke="#4f9b50" stroke-width="1" stroke-linejoin="round"/><polyline points="353.10,497.88 354.78,497.88 356.46,497.88 358.14,497.88 359.82,497.88 361.50,497.88 363.18,497.88 364.86,497.88 366.54,497.88 368.22,497.88 369.90,497.88 371.58,497.88 373.26,497.88 374.93,497.88 376.61,497.88 378.29,497.88 379.97,497.88 381.65,497.88 383.33,497.88 385.01,497.88 386.69,497.88 388.37,497.88 390.05,497.88 391.73,497.88 393.41,497.88 395.09,497.88 396.77,497.88 398.45,497.88 400.13,497.88 401.81,497.88 403.49,497.88 405.17,497.88 406.85,497.88 408.53,497.88 410.21,497.88 411.89,497.88 413.57,497.88 415.24,497.88 416.92,497.88 418.60,495.68 420.28,497.11 421.96,497.11 423.64,491.28 425.32,497.57 427.00,497.88 428.68,497.88 430.36,490.18 432.04,497.34 433.72,497.88 435.40,497.88" fill="none" stroke="#4f9b50" stroke-width="1" stroke-linejoin="round"/><polyline points="353.10,515.50 354.78,514.73 356.46,507.80 358.14,514.73 359.82,513.58 361.50,515.50 363.18,515.50 364.86,515.50 366.54,515.50 368.22,515.50 369.90,515.50 371.58,515.50 373.26,515.50 374.93,515.50 376.61,515.50 378.29,515.50 379.97,515.50 381.65,515.50 383.33,515.50 385.01,515.50 386.69,515.50 388.37,515.50 390.05,515.50 391.73,515.50 393.41,515.50 395.09,515.50 396.77,515.50 398.45,515.50 400.13,515.50 401.81,515.50 403.49,515.50 405.17,515.50 406.85,515.50 408.53,515.50 410.21,515.50 411.89,515.50 413.57,515.50 415.24,515.50 416.92,515.50 418.60,515.50 420.28,515.50 421.96,515.50 423.64,515.50 425.32,515.50 427.00,515.50 428.68,515.50 430.36,515.50 432.04,515.50 433.72,515.50 435.40,515.50" fill="none" stroke="#4f9b50" stroke-width="1" stroke-linejoin="round"/><polyline points="353.10,533.12 354.78,533.12 356.46,533.12 358.14,533.12 359.82,533.12 361.50,533.12 363.18,525.42 364.86,533.12 366.54,533.12 368.22,533.12 369.90,533.12 371.58,533.12 373.26,533.12 374.93,533.12 376.61,525.42 378.29,533.12 379.97,533.12 381.65,533.12 383.33,533.12 385.01,533.12 386.69,533.12 388.37,533.12 390.05,525.42 391.73,533.12 393.41,533.12 395.09,533.12 396.77,533.12 398.45,533.12 400.13,533.12 401.81,533.12 403.49,525.42 405.17,533.12 406.85,533.12 408.53,533.12 410.21,533.12 411.89,533.12 413.57,533.12 415.24,533.12 416.92,525.42 418.60,533.12 420.28,533.12 421.96,533.12 423.64,533.12 425.32,533.12 427.00,533.12 428.68,533.12 430.36,525.42 432.04,533.12 433.72,533.12 435.40,533.12" fill="none" stroke="#4f9b50" stroke-width="1" stroke-linejoin="round"/><polyline points="353.10,550.74 354.78,543.04 356.46,550.74 358.14,550.74 359.82,550.74 361.50,550.74 363.18,550.74 364.86,550.74 366.54,550.74 368.22,550.74 369.90,550.74 371.58,550.74 373.26,550.74 374.93,550.74 376.61,550.74 378.29,550.74 379.97,550.74 381.65,550.74 383.33,550.74 385.01,550.74 386.69,550.74 388.37,550.74 390.05,550.74 391.73,550.74 393.41,550.74 395.09,550.74 396.77,550.74 398.45,550.74 400.13,550.74 401.81,550.74 403.49,550.74 405.17,550.74 406.85,550.74 408.53,550.74 410.21,550.74 411.89,550.74 413.57,550.74 415.24,550.74 416.92,550.74 418.60,550.74 420.28,550.74 421.96,550.74 423.64,550.74 425.32,550.74 427.00,550.74 428.68,550.74 430.36,550.74 432.04,550.74 433.72,550.74 435.40,550.74" fill="none" stroke="#4f9b50" stroke-width="1" stroke-linejoin="round"/><polyline points="353.10,568.36 354.78,568.36 356.46,568.36 358.14,568.36 359.82,568.36 361.50,568.36 363.18,568.36 364.86,568.36 366.54,568.36 368.22,568.36 369.90,568.36 371.58,568.36 373.26,568.36 374.93,568.36 376.61,568.36 378.29,568.36 379.97,568.36 381.65,568.36 383.33,568.36 385.01,568.36 386.69,568.36 388.37,568.36 390.05,568.36 391.73,568.36 393.41,568.36 395.09,568.36 396.77,568.36 398.45,568.36 400.13,568.36 401.81,568.36 403.49,568.36 405.17,568.36 406.85,568.36 408.53,568.36 410.21,568.36 411.89,568.36 413.57,568.36 415.24,568.36 416.92,568.36 418.60,568.36 420.28,568.36 421.96,568.36 423.64,568.36 425.32,568.36 427.00,568.36 428.68,568.36 430.36,568.36 432.04,560.66 433.72,567.59 435.40,561.43" fill="none" stroke="#4f9b50" stroke-width="1" stroke-linejoin="round"/><polyline points="353.10,585.98 354.78,585.98 356.46,585.98 358.14,585.98 359.82,585.98 361.50,585.98 363.18,585.98 364.86,585.98 366.54,585.98 368.22,585.98 369.90,585.98 371.58,585.98 373.26,585.98 374.93,585.98 376.61,585.98 378.29,585.98 379.97,585.98 381.65,585.98 383.33,585.98 385.01,585.98 386.69,585.98 388.37,585.98 390.05,585.98 391.73,585.98 393.41,585.98 395.09,585.98 396.77,585.98 398.45,585.98 400.13,585.98 401.81,585.98 403.49,585.98 405.17,585.98 406.85,585.98 408.53,585.98 410.21,585.98 411.89,585.98 413.57,585.98 415.24,585.98 416.92,585.98 418.60,585.98 420.28,585.98 421.96,585.98 423.64,585.98 425.32,578.28 427.00,585.98 428.68,585.98 430.36,585.98 432.04,585.98 433.72,585.98 435.40,585.98" fill="none" stroke="#4f9b50" stroke-width="1" stroke-linejoin="round"/><polyline points="594.30,429.10 595.98,429.10 597.67,429.10 599.35,429.10 601.03,419.70 602.72,429.10 604.40,429.10 606.09,429.10 607.77,419.70 609.45,429.10 611.14,429.10 612.82,429.10 614.50,419.70 616.19,429.10 617.87,429.10 619.56,429.10 621.24,419.70 622.92,429.10 624.61,429.10 626.29,429.10 627.97,419.70 629.66,429.10 631.34,429.10 633.02,429.10 634.71,419.70 636.39,429.10 638.08,429.10 639.76,429.10 641.44,419.70 643.13,429.10 644.81,429.10 646.49,429.10 648.18,419.70 649.86,429.10 651.54,429.10 653.23,429.10 654.91,419.70 656.60,429.10 658.28,429.10 659.96,429.10 661.65,419.70 663.33,429.10 665.01,429.10 666.70,429.10 668.38,419.70 670.07,429.10 671.75,429.10 673.43,429.10 675.12,419.70 676.80,425.34" fill="none" stroke="#4f9b50" stroke-width="1" stroke-linejoin="round"/><polyline points="594.30,446.72 595.98,446.72 597.67,446.72 599.35,446.72 601.03,437.32 602.72,446.72 604.40,446.72 606.09,446.72 607.77,437.32 609.45,446.72 611.14,446.72 612.82,446.72 614.50,437.32 616.19,446.72 617.87,446.72 619.56,446.72 621.24,437.32 622.92,446.72 624.61,446.72 626.29,446.72 627.97,437.32 629.66,446.72 631.34,446.72 633.02,446.72 634.71,437.32 636.39,446.72 638.08,446.72 639.76,446.72 641.44,437.32 643.13,446.72 644.81,446.72 646.49,446.72 648.18,437.32 649.86,446.72 651.54,446.72 653.23,446.72 654.91,437.32 656.60,446.72 658.28,446.72 659.96,446.72 661.65,437.32 663.33,446.72 665.01,446.72 666.70,446.72 668.38,437.32 670.07,446.72 671.75,446.72 673.43,446.72 675.12,437.32 676.80,442.96" fill="none" stroke="#4f9b50" stroke-width="1" stroke-linejoin="round"/><polyline points="594.30,464.34 595.98,464.34 597.67,454.94 599.35,464.34 601.03,464.34 602.72,464.34 604.40,460.30 606.09,464.34 607.77,464.34 609.45,460.30 611.14,464.34 612.82,460.30 614.50,464.34 616.19,460.30 617.87,463.87 619.56,464.34 621.24,460.30 622.92,464.34 624.61,464.34 626.29,460.30 627.97,464.34 629.66,460.30 631.34,463.78 633.02,460.30 634.71,464.34 636.39,464.34 638.08,460.30 639.76,464.34 641.44,460.30 643.13,464.34 644.81,460.30 646.49,463.87 648.18,460.30 649.86,464.34 651.54,464.34 653.23,460.30 654.91,464.34 656.60,464.34 658.28,460.30 659.96,464.34 661.65,464.34 663.33,460.30 665.01,464.34 666.70,464.34 668.38,460.30 670.07,464.34 671.75,463.87 673.43,460.30 675.12,464.34 676.80,460.30" fill="none" stroke="#4f9b50" stroke-width="1" stroke-linejoin="round"/><polyline points="594.30,481.96 595.98,481.96 597.67,472.56 599.35,481.96 601.03,481.96 602.72,481.96 604.40,477.92 606.09,481.96 607.77,481.96 609.45,477.92 611.14,481.96 612.82,477.92 614.50,481.96 616.19,477.92 617.87,481.49 619.56,481.96 621.24,477.92 622.92,481.96 624.61,481.96 626.29,477.92 627.97,481.96 629.66,477.92 631.34,481.40 633.02,477.92 634.71,481.96 636.39,481.96 638.08,477.92 639.76,481.96 641.44,477.92 643.13,481.96 644.81,477.92 646.49,481.49 648.18,477.92 649.86,481.96 651.54,481.96 653.23,477.92 654.91,481.96 656.60,481.96 658.28,477.92 659.96,481.96 661.65,481.96 663.33,477.92 665.01,481.96 666.70,481.96 668.38,477.92 670.07,481.96 671.75,481.49 673.43,477.92 675.12,481.96 676.80,477.92" fill="none" stroke="#4f9b50" stroke-width="1" stroke-linejoin="round"/><polyline points="594.30,499.58 595.98,499.58 597.67,490.18 599.35,496.76 601.03,490.18 602.72,499.58 604.40,490.18 606.09,499.58 607.77,499.58 609.45,490.18 611.14,499.58 612.82,490.18 614.50,499.58 616.19,490.18 617.87,499.58 619.56,499.58 621.24,490.18 622.92,499.58 624.61,499.58 626.29,490.18 627.97,499.58 629.66,490.18 631.34,499.58 633.02,490.18 634.71,499.58 636.39,499.58 638.08,490.18 639.76,499.58 641.44,490.18 643.13,499.58 644.81,490.18 646.49,499.58 648.18,490.18 649.86,499.58 651.54,499.58 653.23,490.18 654.91,499.58 656.60,499.58 658.28,490.18 659.96,499.58 661.65,499.58 663.33,490.18 665.01,499.58 666.70,499.58 668.38,490.18 670.07,499.58 671.75,499.58 673.43,490.18 675.12,499.58 676.80,490.18" fill="none" stroke="#4f9b50" stroke-width="1" stroke-linejoin="round"/><polyline points="594.30,517.20 595.98,517.20 597.67,507.80 599.35,517.20 601.03,517.20 602.72,517.20 604.40,507.80 606.09,517.20 607.77,517.20 609.45,507.80 611.14,517.20 612.82,507.80 614.50,517.20 616.19,507.80 617.87,517.20 619.56,517.20 621.24,507.80 622.92,517.20 624.61,517.20 626.29,507.80 627.97,517.20 629.66,507.80 631.34,517.20 633.02,507.80 634.71,517.20 636.39,517.20 638.08,507.80 639.76,517.20 641.44,507.80 643.13,517.20 644.81,507.80 646.49,517.20 648.18,507.80 649.86,517.20 651.54,517.20 653.23,507.80 654.91,517.20 656.60,517.20 658.28,507.80 659.96,517.20 661.65,517.20 663.33,507.80 665.01,517.20 666.70,517.20 668.38,507.80 670.07,517.20 671.75,517.20 673.43,507.80 675.12,517.20 676.80,507.80" fill="none" stroke="#4f9b50" stroke-width="1" stroke-linejoin="round"/><polyline points="594.30,534.82 595.98,534.82 597.67,525.42 599.35,534.82 601.03,534.82 602.72,534.82 604.40,525.42 606.09,534.82 607.77,534.82 609.45,525.42 611.14,534.82 612.82,525.42 614.50,534.82 616.19,525.42 617.87,534.82 619.56,534.82 621.24,525.42 622.92,534.82 624.61,534.82 626.29,525.42 627.97,534.82 629.66,525.42 631.34,534.82 633.02,525.42 634.71,534.82 636.39,534.82 638.08,525.42 639.76,534.82 641.44,525.42 643.13,534.82 644.81,525.42 646.49,534.82 648.18,525.42 649.86,534.82 651.54,534.82 653.23,525.42 654.91,534.82 656.60,534.82 658.28,525.42 659.96,534.82 661.65,534.82 663.33,525.42 665.01,534.82 666.70,534.82 668.38,525.42 670.07,534.82 671.75,534.82 673.43,525.42 675.12,534.82 676.80,525.42" fill="none" stroke="#4f9b50" stroke-width="1" stroke-linejoin="round"/><polyline points="594.30,552.44 595.98,552.44 597.67,552.44 599.35,552.44 601.03,552.44 602.72,552.44 604.40,543.04 606.09,552.44 607.77,552.44 609.45,543.04 611.14,552.44 612.82,543.04 614.50,552.44 616.19,543.04 617.87,552.44 619.56,552.44 621.24,543.04 622.92,552.44 624.61,552.44 626.29,543.04 627.97,552.44 629.66,543.04 631.34,552.44 633.02,543.04 634.71,552.44 636.39,552.44 638.08,543.04 639.76,552.44 641.44,543.04 643.13,552.44 644.81,543.04 646.49,552.44 648.18,543.04 649.86,552.44 651.54,552.44 653.23,543.04 654.91,552.44 656.60,552.44 658.28,543.04 659.96,552.44 661.65,552.44 663.33,543.04 665.01,552.44 666.70,552.44 668.38,543.04 670.07,552.44 671.75,552.44 673.43,543.04 675.12,552.44 676.80,543.04" fill="none" stroke="#4f9b50" stroke-width="1" stroke-linejoin="round"/><polyline points="594.30,570.06 595.98,570.06 597.67,570.06 599.35,570.06 601.03,570.06 602.72,570.06 604.40,560.66 606.09,570.06 607.77,570.06 609.45,560.66 611.14,570.06 612.82,560.66 614.50,570.06 616.19,560.66 617.87,570.06 619.56,570.06 621.24,560.66 622.92,570.06 624.61,570.06 626.29,560.66 627.97,570.06 629.66,560.66 631.34,570.06 633.02,560.66 634.71,570.06 636.39,570.06 638.08,560.66 639.76,570.06 641.44,560.66 643.13,570.06 644.81,560.66 646.49,570.06 648.18,560.66 649.86,570.06 651.54,570.06 653.23,560.66 654.91,570.06 656.60,570.06 658.28,560.66 659.96,570.06 661.65,570.06 663.33,560.66 665.01,570.06 666.70,570.06 668.38,560.66 670.07,570.06 671.75,570.06 673.43,560.66 675.12,570.06 676.80,560.66" fill="none" stroke="#4f9b50" stroke-width="1" stroke-linejoin="round"/><polyline points="594.30,587.68 595.98,587.68 597.67,587.68 599.35,587.68 601.03,587.68 602.72,587.68 604.40,578.28 606.09,587.68 607.77,587.68 609.45,578.28 611.14,587.68 612.82,578.28 614.50,587.68 616.19,578.28 617.87,587.68 619.56,587.68 621.24,578.28 622.92,587.68 624.61,587.68 626.29,578.28 627.97,587.68 629.66,578.28 631.34,587.68 633.02,578.28 634.71,587.68 636.39,587.68 638.08,578.28 639.76,587.68 641.44,578.28 643.13,587.68 644.81,578.28 646.49,587.68 648.18,578.28 649.86,587.68 651.54,587.68 653.23,578.28 654.91,587.68 656.60,587.68 658.28,578.28 659.96,587.68 661.65,587.68 663.33,578.28 665.01,587.68 666.70,587.68 668.38,578.28 670.07,587.68 671.75,587.68 673.43,578.28 675.12,587.68 676.80,578.28" fill="none" stroke="#4f9b50" stroke-width="1" stroke-linejoin="round"/></svg>
<div class="r" style="left:439.0px;top:593.3px;width:15.7px;height:14.4px;background:transparent;box-sizing:border-box;border:1.1px solid #1f8fd2;border-radius:2px;"></div>
<div class="t" style="left:413.72px;top:597.00px;font:400 7.681px/7.681px 'Liberation Sans', sans-serif;color:#666c72;transform:scale(0.9136,1.0000);">« Prev</div>
<div class="t" style="left:443.99px;top:597.00px;font:700 7.681px/7.681px 'Liberation Sans', sans-serif;color:#3aa3e3;transform:scale(0.8864,1.0000);">1</div>
<div class="t" style="left:459.10px;top:597.00px;font:400 7.571px/7.571px 'Liberation Sans', sans-serif;color:#e3e6e9;transform:scale(1.3208,1.0000);">2</div>
<div class="t" style="left:474.39px;top:597.00px;font:400 7.681px/7.681px 'Liberation Sans', sans-serif;color:#e3e6e9;transform:scale(0.9856,1.0000);">Next »</div>
<div class="r" style="left:907.6px;top:593.3px;width:15.7px;height:14.4px;background:transparent;box-sizing:border-box;border:1.1px solid #1f8fd2;border-radius:2px;"></div>
<div class="t" style="left:881.71px;top:597.00px;font:400 7.681px/7.681px 'Liberation Sans', sans-serif;color:#666c72;transform:scale(0.9410,1.0000);">« Prev</div>
<div class="t" style="left:912.99px;top:597.00px;font:700 7.681px/7.681px 'Liberation Sans', sans-serif;color:#3aa3e3;transform:scale(0.8864,1.0000);">1</div>
<div class="t" style="left:927.10px;top:597.00px;font:400 7.571px/7.571px 'Liberation Sans', sans-serif;color:#e3e6e9;transform:scale(1.3208,1.0000);">2</div>
<div class="t" style="left:942.36px;top:597.00px;font:400 7.571px/7.571px 'Liberation Sans', sans-serif;color:#e3e6e9;transform:scale(1.2932,1.0000);">3</div>
<div class="t" style="left:958.19px;top:597.00px;font:400 7.681px/7.681px 'Liberation Sans', sans-serif;color:#e3e6e9;transform:scale(0.9950,1.0000);">Next »</div>
<div class="r" style="left:0px;top:625px;width:1024px;height:1px;background:#2a2d31;"></div>
<div class="r" style="left:0px;top:626px;width:1024px;height:20px;background:#1e2024;"></div>
<svg style="left:24.8px;top:632.9px" width="8" height="6" viewBox="0 0 8 6"><path d="M0 0.5H1M2 0.5H8M0 2.9H1M2 2.9H8M0 5.3H1M2 5.3H8" stroke="#81878d" stroke-width="1"/></svg>
<svg style="left:43.2px;top:632px" width="7.8" height="8" viewBox="0 0 7.8 8"><path d="M3.9 0V8M0 4H7.8" stroke="#81878d" stroke-width="1.2"/></svg>
<div class="t" style="left:56.79px;top:633.00px;font:400 7.971px/7.971px 'Liberation Sans', sans-serif;color:#e3e6e9;transform:scale(0.9524,1.0000);">No investigation is currently loaded. Please create (+) or load an existing one (≡).</div>
<svg style="left:990.5px;top:631.5px" width="9.5" height="9.5" viewBox="0 0 9.5 9.5"><circle cx="4.1" cy="4.1" r="3.2" stroke="#9aa0a6" stroke-width="1.25" fill="none"/><circle cx="4.1" cy="4.1" r="0.7" fill="#7d838a"/><path d="M6.5 6.5L8.7 8.6" stroke="#9aa0a6" stroke-width="1.5" stroke-linecap="round"/></svg>
</div></div></body></html>
